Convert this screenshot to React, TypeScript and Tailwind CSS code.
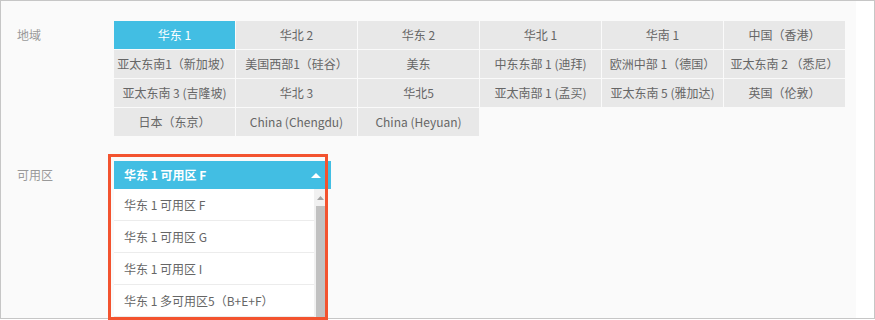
const regions: string[] = [
  '华东 1',
  '华北 2',
  '华东 2',
  '华北 1',
  '华南 1',
  '中国（香港）',
  '亚太东南1（新加坡）',
  '美国西部1（硅谷）',
  '美东',
  '中东东部 1 (迪拜)',
  '欧洲中部 1（德国）',
  '亚太东南 2 （悉尼）',
  '亚太东南 3 (吉隆坡)',
  '华北 3',
  '华北5',
  '亚太南部 1 (孟买)',
  '亚太东南 5 (雅加达)',
  '英国（伦敦）',
  '日本（东京）',
  'China (Chengdu)',
  'China (Heyuan)',
]

const zones: string[] = ['华东 1 可用区 F', '华东 1 可用区 G', '华东 1 可用区 I', '华东 1 多可用区5（B+E+F）']

// 可用区のドロップダウン（展開状態）
function ZoneDropdown({ selected }: { readonly selected: string }) {
  return (
    <div className="relative w-[217px]">
      <div className="flex h-[28px] items-center justify-between bg-[#42bee3] pl-[10px] pr-[10px] text-[12px] font-semibold text-white">
        <span>{selected}</span>
        <svg width="10" height="5" viewBox="0 0 10 5">
          <path d="M0 5 L5 0 L10 5 Z" fill="#ffffff" />
        </svg>
      </div>
      <div className="flex w-[213px] bg-white">
        <ul className="w-[200px]">
          {zones.map((z) => (
            <li
              key={z}
              className="flex h-[32px] items-center border-b border-[#ececec] pl-[10px] text-[12px] text-[#666666]"
            >
              {z}
            </li>
          ))}
        </ul>
        <div className="flex w-[13px] flex-col items-center bg-[#f1f1f1]">
          <svg className="mt-[7px]" width="7" height="4" viewBox="0 0 7 4">
            <path d="M0 4 L3.5 0 L7 4 Z" fill="#a3a3a3" />
          </svg>
          <div className="mt-[6px] h-[200px] w-[10px] bg-[#c1c1c1]" />
        </div>
      </div>
      {/* 注釈の赤枠 */}
      <div className="pointer-events-none absolute left-[-6px] top-[-7px] h-[166px] w-[220px] border-[3px] border-[#f3532f]" />
    </div>
  )
}

export default function App() {
  return (
    <div
      className="h-[320px] w-[875px] overflow-hidden bg-white"
      style={{ fontFamily: '"Noto Sans CJK SC", "Noto Sans", sans-serif' }}
    >
      <div className="flex h-[319px] border border-[#c6c6c6] bg-white">
        <div className="w-[855px] bg-[#fafafa] pl-[16px] pt-[20px]">
          <div className="flex">
            <div className="flex h-[28px] w-[97px] items-center text-[12px] text-[#999999]">地域</div>
            <div className="grid grid-cols-[repeat(6,121px)] gap-px">
              {regions.map((r, i) => (
                <div
                  key={r}
                  className={
                    i === 0
                      ? 'flex h-[28px] items-center justify-center whitespace-nowrap bg-[#42bee3] text-[12px] text-white'
                      : 'flex h-[28px] items-center justify-center whitespace-nowrap bg-[#e8e8e8] text-[12px] text-[#666666]'
                  }
                >
                  {r}
                </div>
              ))}
            </div>
          </div>
          <div className="mt-[25px] flex">
            <div className="flex h-[28px] w-[97px] items-center text-[12px] text-[#999999]">可用区</div>
            <ZoneDropdown selected="华东 1 可用区 F" />
          </div>
        </div>
      </div>
    </div>
  )
}
